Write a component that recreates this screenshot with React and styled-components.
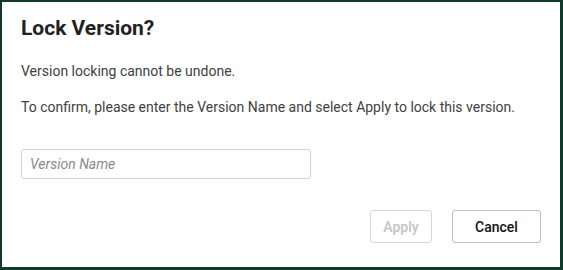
import React, { useState } from "react";
import styled, { createGlobalStyle } from "styled-components";

const Global = createGlobalStyle`
    body {
        margin: 0;
        background: #ffffff;
        font-family: Roboto, "Liberation Sans", sans-serif;
    }
`

const Dialog = styled.div`
    width: 563px;
    height: 270px;
    box-sizing: border-box;
    border-style: solid;
    border-color: #0f3a2c;
    border-width: 2px 3px 3px 2px;
    background: #fff;
    padding: 13px 19px 0 19px;
    display: flex;
    flex-direction: column;
`

const Title = styled.h3`
    margin: 0;
    font-size: 21px;
    line-height: 26px;
    font-weight: bold;
    color: #222;
`

const Text = styled.p`
    margin: ${props => props.top}px 0 0 0;
    font-size: 14px;
    line-height: 17px;
    color: #414141;
`

const Input = styled.input`
    margin-top: 33px;
    width: 290px;
    height: 30px;
    box-sizing: border-box;
    border: 1px solid #d3d3d3;
    border-radius: 3px;
    padding: 0 8px;
    font-family: Roboto, "Liberation Sans", sans-serif;
    font-size: 14px;
    color: #333;
    outline: none;

    &::placeholder {
        font-style: italic;
        color: #8a8a8a;
    }
`

const Footer = styled.div`
    margin-top: 31px;
    display: flex;
    justify-content: flex-end;
    gap: 20px;
`

const Button = styled.button`
    height: 33px;
    width: ${props => props.w}px;
    box-sizing: border-box;
    background: #fff;
    border: 1px solid ${props => props.disabled ? "#d6d6d6" : "#bdbdbd"};
    border-radius: 3px;
    font-family: Roboto, "Liberation Sans", sans-serif;
    font-size: 14px;
    font-weight: 500;
    color: ${props => props.disabled ? "#c4c4c4" : "#111"};
    cursor: pointer;
`

const LockVersion = () => {
    const [name, setName] = useState('')

    return (
        <Dialog>
            <Title>Lock Version?</Title>
            <Text top={22}>Version locking cannot be undone.</Text>
            <Text top={19}>To confirm, please enter the Version Name and select Apply to lock this version.</Text>
            <Input
                placeholder="Version Name"
                value={name}
                onChange={(e) => setName(e.target.value)} />
            <Footer>
                <Button w={62} disabled={name.trim() === ''}>Apply</Button>
                <Button w={89}>Cancel</Button>
            </Footer>
        </Dialog>
    )
}

const App = () => (
    <>
        <Global />
        <LockVersion />
    </>
)

export default App;
